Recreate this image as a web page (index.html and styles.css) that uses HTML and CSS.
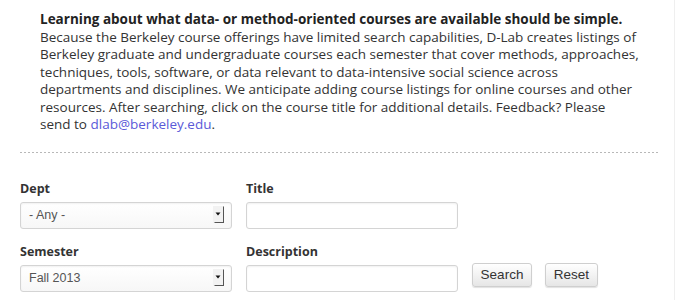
FILE: index.html
```html
<!DOCTYPE html>
<html>
<head>
<meta charset="utf-8">
<link rel="stylesheet" href="styles.css">
</head>
<body>
<div class="page">
  <div class="intro">
    <p class="lead">Learning about what data- or method-oriented courses are available should be simple.</p>
    <p class="body">Because the Berkeley course offerings have limited search capabilities, D-Lab creates listings of<br>Berkeley graduate and undergraduate courses each semester that cover methods, approaches,<br>techniques, tools, software, or data relevant to data-intensive social science across<br>departments and disciplines. We anticipate adding course listings for online courses and other<br>resources. After searching, click on the course title for additional details. Feedback? Please<br>send to <a href="#">dlab@berkeley.edu</a>.</p>
  </div>
  <div class="rule"></div>
  <form class="filters">
    <div class="field">
      <label>Dept</label>
      <div class="select"><span>- Any -</span>
        <svg class="arrow" width="12" height="18" viewBox="0 0 12 18"><rect x="0" y="0" width="11" height="17" fill="#f2f2f2"/><path d="M2.5 6.5h5l-2.5 3z" fill="#111"/><path d="M10.5 0.5v16M1.5 16.5h9.5" stroke="#555" stroke-width="1" fill="none"/></svg>
      </div>
    </div>
    <div class="field">
      <label>Title</label>
      <div class="input"></div>
    </div>
    <div class="spacer"></div>
    <div class="field">
      <label>Semester</label>
      <div class="select"><span>Fall 2013</span>
        <svg class="arrow" width="12" height="18" viewBox="0 0 12 18"><rect x="0" y="0" width="11" height="17" fill="#f2f2f2"/><path d="M2.5 6.5h5l-2.5 3z" fill="#111"/><path d="M10.5 0.5v16M1.5 16.5h9.5" stroke="#555" stroke-width="1" fill="none"/></svg>
      </div>
    </div>
    <div class="field">
      <label>Description</label>
      <div class="input"></div>
    </div>
    <div class="buttons">
      <button type="button" class="btn search">Search</button>
      <button type="button" class="btn reset">Reset</button>
    </div>
  </form>
</div>
</body>
</html>
```
FILE: styles.css
```css
html, body {
  margin: 0;
  padding: 0;
  background: #fff;
}
.page {
  width: 674px;
  height: 300px;
  border-right: 1px solid #efefef;
  font-family: "Open Sans", "DejaVu Sans", sans-serif;
  color: #333;
}
.intro {
  padding: 11px 0 0 40px;
  width: 625px;
  font-size: 13.5px;
  line-height: 17.5px;
}
.intro p {
  margin: 0;
  white-space: nowrap;
}
.lead {
  font-weight: bold;
  color: #222;
}
.body a {
  color: #5a5ad8;
  text-decoration: none;
}
.rule {
  margin: 18px 20px 0 20px;
  width: 640px;
  height: 1px;
  background: repeating-linear-gradient(to right, #b8b8b8 0 2px, transparent 2px 4px);
}
.filters {
  display: grid;
  grid-template-columns: 212px 212px auto;
  column-gap: 14px;
  row-gap: 14px;
  padding: 27px 0 0 20px;
  align-items: end;
}
.field {
  display: flex;
  flex-direction: column;
  gap: 5px;
}
.field label {
  font-weight: bold;
  font-size: 12.5px;
  line-height: 17px;
  color: #333;
}
.select, .input {
  box-sizing: border-box;
  height: 27px;
  border: 1px solid #d4d4d4;
  border-radius: 3px;
  background: #fff;
  box-shadow: inset 0 1px 2px rgba(0,0,0,0.06);
}
.select {
  display: flex;
  align-items: center;
  justify-content: space-between;
  padding: 0 6px 0 8px;
  font-family: "Liberation Sans", Arial, sans-serif;
  font-size: 12.5px;
  color: #555;
  background: linear-gradient(#fff, #f7f7f7);
}
.arrow {
  display: block;
}
.buttons {
  display: flex;
  gap: 13px;
  padding-bottom: 5px;
}
.btn {
  height: 24px;
  box-sizing: border-box;
  border: 1px solid #cfcfcf;
  border-radius: 3px;
  background: linear-gradient(#ffffff, #e6e6e6);
  box-shadow: 0 1px 1px rgba(0,0,0,0.12);
  font-family: "Liberation Sans", Arial, sans-serif;
  font-size: 13.5px;
  color: #333;
  padding: 0;
}
.search { width: 60px; }
.reset { width: 53px; }
```
